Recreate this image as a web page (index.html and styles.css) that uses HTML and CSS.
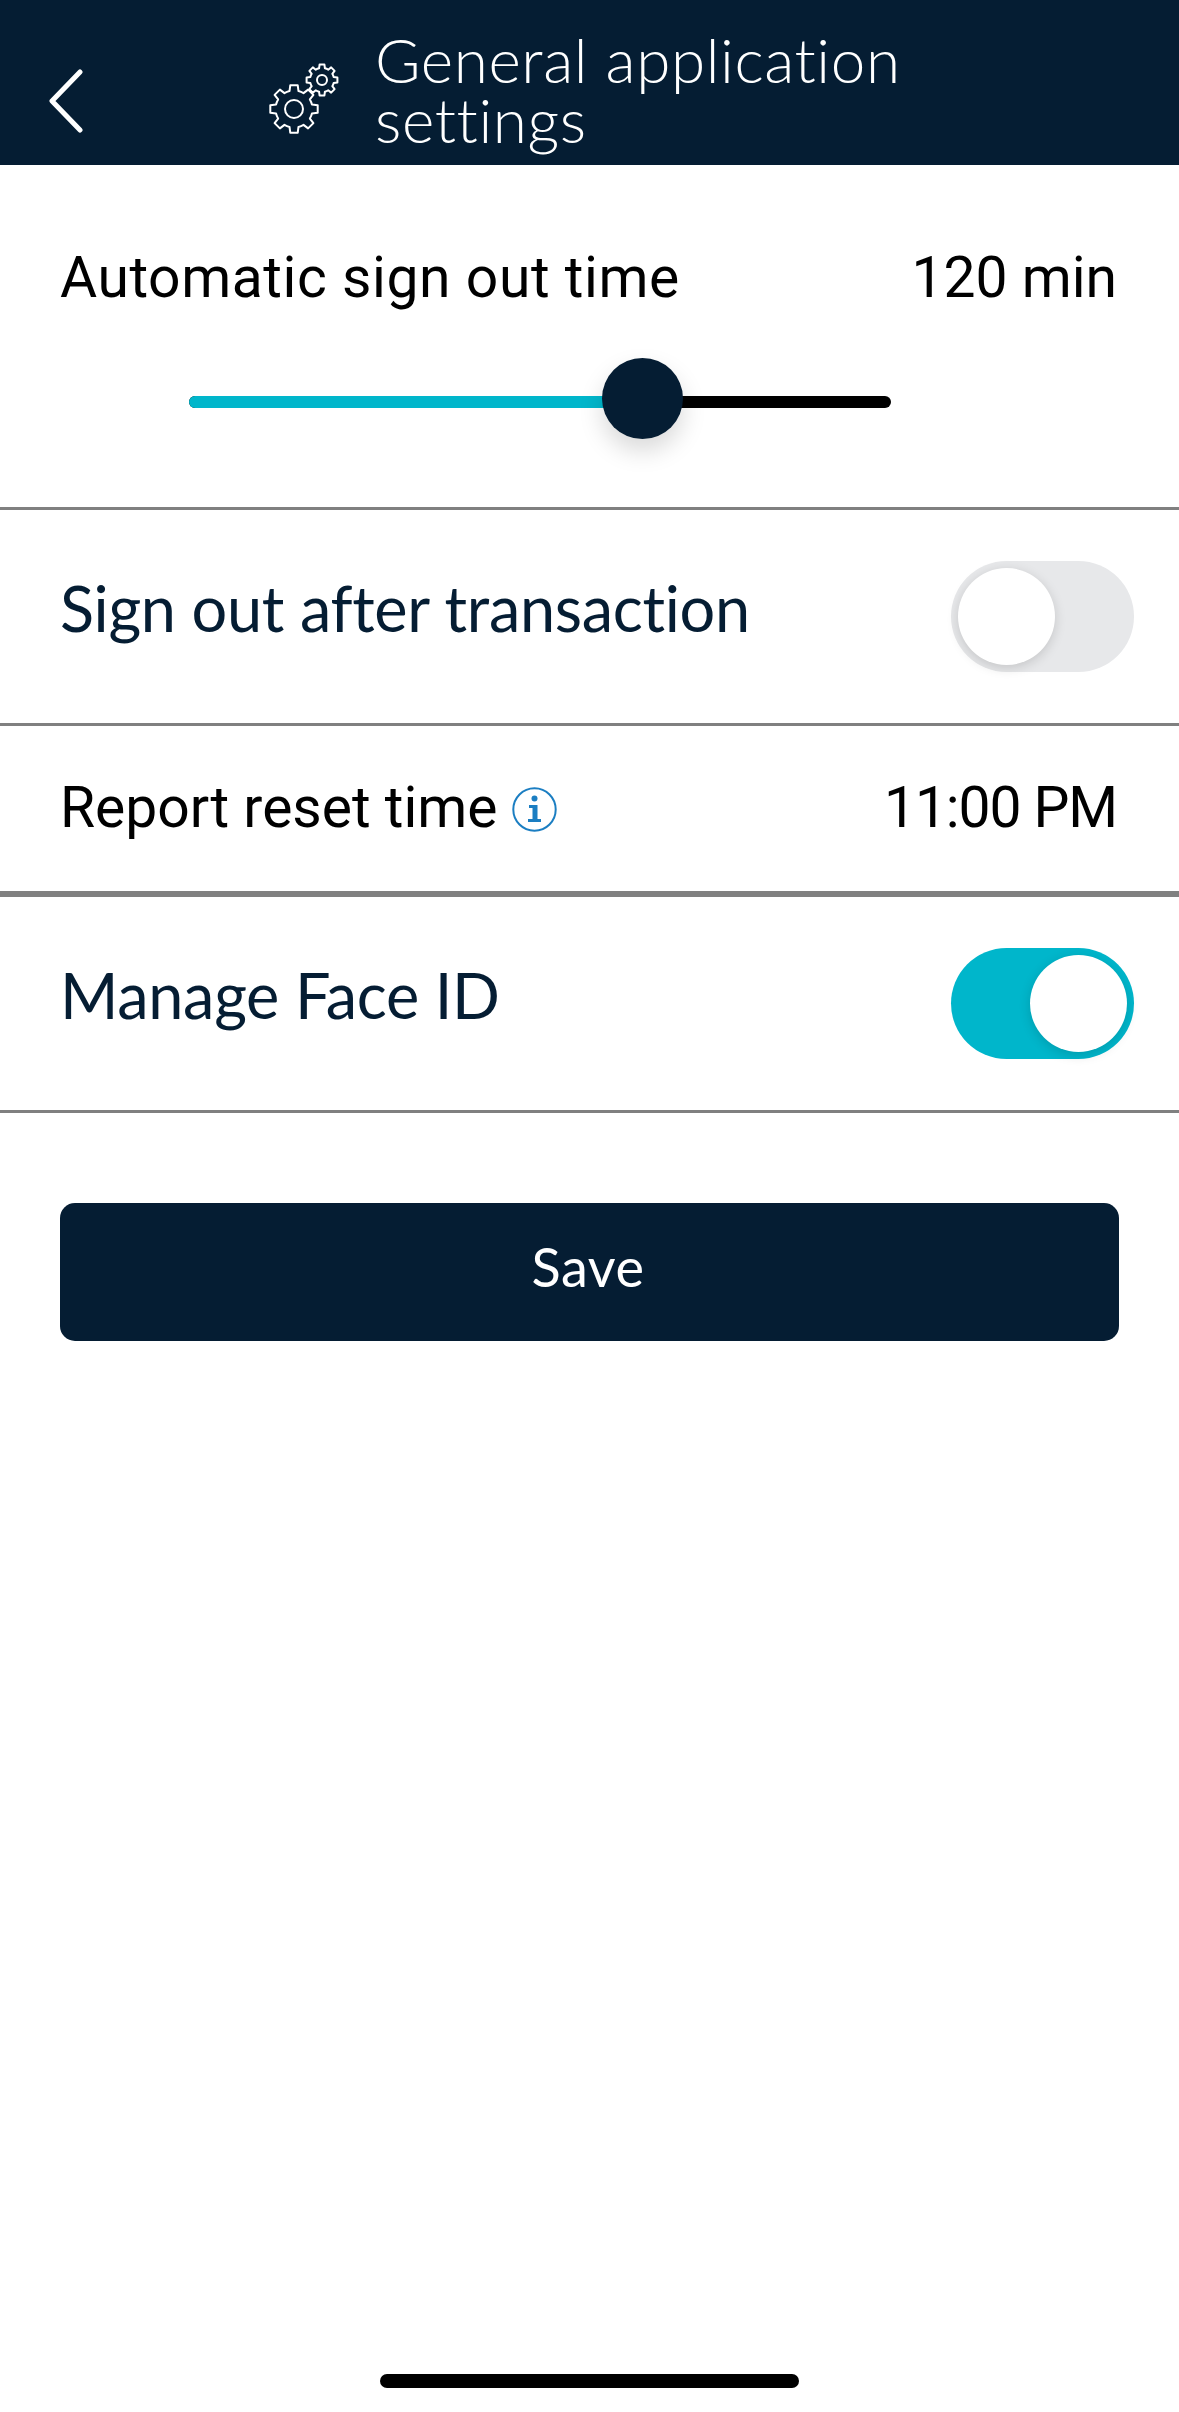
FILE: index.html
```html
<!DOCTYPE html>
<html>
<head>
  <title>General application settings</title>
  <link rel="stylesheet" href="styles.css">
</head>
<body>
  <div id="header">
    <svg class="back-icon" width="34" height="64" viewBox="0 0 34 64">
      <path d="M31 3 L3 32 L31 61" />
    </svg>
    <svg class="gear-icon" width="76" height="76" viewBox="0 0 76 76">
      <defs>
        <path id="gear" vector-effect="non-scaling-stroke" d="M-4.48 -17.95 L-3.75 -23.7 L3.75 -23.7 L4.48 -17.95 A18.5 18.5 0 0 1 9.53 -15.86 L14.1 -19.4 L19.4 -14.1 L15.86 -9.53 A18.5 18.5 0 0 1 17.95 -4.48 L23.7 -3.75 L23.7 3.75 L17.95 4.48 A18.5 18.5 0 0 1 15.86 9.53 L19.4 14.1 L14.1 19.4 L9.53 15.86 A18.5 18.5 0 0 1 4.48 17.95 L3.75 23.7 L-3.75 23.7 L-4.48 17.95 A18.5 18.5 0 0 1 -9.53 15.86 L-14.1 19.4 L-19.4 14.1 L-15.86 9.53 A18.5 18.5 0 0 1 -17.95 4.48 L-23.7 3.75 L-23.7 -3.75 L-17.95 -4.48 A18.5 18.5 0 0 1 -15.86 -9.53 L-19.4 -14.1 L-14.1 -19.4 L-9.53 -15.86 A18.5 18.5 0 0 1 -4.48 -17.95 Z" />
      </defs>
      <use href="#gear" transform="translate(25 50)" />
      <circle cx="25" cy="50" r="9" />
      <use href="#gear" transform="translate(53 21) scale(0.65)" />
      <circle cx="53" cy="21" r="5" />
    </svg>
    <div class="title">General application<br>settings</div>
  </div>

  <div class="row row-slider">
    <div class="row-line">
      <span class="label-plain label-wide">Automatic sign out time</span>
      <span class="label-plain">120 min</span>
    </div>
    <div class="slider">
      <div class="slider-fill"></div>
      <div class="slider-knob"></div>
    </div>
  </div>

  <div class="row row-toggle">
    <span class="label-brand">Sign out after transaction</span>
    <div class="toggle"><div class="toggle-knob"></div></div>
  </div>

  <div class="row row-time">
    <span class="label-plain">Report reset time
      <svg class="info-icon" width="45" height="45" viewBox="0 0 45 45">
        <circle cx="22.5" cy="22.5" r="21.2" fill="none" stroke="#1b7ec2" stroke-width="2" />
        <circle cx="22.5" cy="11.5" r="3" fill="#1b7ec2" />
        <path d="M17 18 H25.5 V32 H29 V35 H16 V32 H20.5 V21 H17 Z" fill="#1b7ec2" />
      </svg>
    </span>
    <span class="label-plain label-narrow">11:00 PM</span>
  </div>

  <div class="row row-toggle row-faceid">
    <span class="label-brand">Manage Face ID</span>
    <div class="toggle toggle-on"><div class="toggle-knob"></div></div>
  </div>

  <button class="save-button">Save</button>

  <div class="home-indicator"></div>
</body>
</html>
```

FILE: styles.css
```css
html, body {
  height: 100%;
}

body {
  display: flex;
  flex-direction: column;
  height: 2412px;
  margin: 0;
  overflow: hidden;
  background-color: #fff;
  font-family: Roboto, sans-serif;
}

#header {
  display: flex;
  flex: none;
  align-items: center;
  height: 165px;
  background-color: #051d33;
  color: #fff;
}

.back-icon {
  flex: none;
  margin: 36px 0 0 49px;
}

.back-icon path {
  fill: none;
  stroke: #fff;
  stroke-width: 5;
  stroke-linecap: round;
  stroke-linejoin: round;
}

.gear-icon {
  flex: none;
  margin: 28px 0 0 186px;
}

.gear-icon use,
.gear-icon circle {
  fill: none;
  stroke: #fff;
  stroke-width: 2;
  stroke-linejoin: round;
}

.title {
  margin: 12px 0 0 30px;
  font-family: Lato, sans-serif;
  font-size: 62px;
  font-weight: 300;
  line-height: 60px;
  letter-spacing: 0.6px;
}

.row {
  display: flex;
  flex: none;
  align-items: center;
  justify-content: space-between;
  box-sizing: border-box;
  border-bottom: 3px solid #808080;
}

.row-slider {
  display: block;
  height: 345px;
  padding: 0 62px 0 60px;
}

.row-line {
  display: flex;
  justify-content: space-between;
  padding-top: 78px;
  line-height: 70px;
}

.label-plain {
  color: #000;
  font-size: 57px;
}

.label-wide {
  letter-spacing: 0.57px;
}

.label-narrow {
  letter-spacing: -1.1px;
}

.label-brand {
  margin-bottom: 18px;
  color: #051d33;
  font-family: Lato, sans-serif;
  font-size: 63px;
  letter-spacing: -0.3px;
}

.slider {
  position: relative;
  width: 702px;
  height: 12px;
  margin: 83px 0 0 129px;
  border-radius: 6px;
  background-color: #000;
}

.slider-fill {
  width: 430px;
  height: 100%;
  border-radius: 6px 0 0 6px;
  background-color: #00b6cb;
}

.slider-knob {
  position: absolute;
  top: -38px;
  left: 413px;
  width: 81px;
  height: 81px;
  border-radius: 50%;
  background-color: #051d33;
  box-shadow: 0 12px 24px rgba(0, 0, 0, 0.15);
}

.row-toggle {
  height: 216px;
  padding: 0 45px 0 60px;
}

.row-time {
  height: 171px;
  padding: 0 62px 3px 60px;
  border-bottom-width: 6px;
}

.info-icon {
  vertical-align: -5px;
}

.toggle {
  display: flex;
  flex: none;
  box-sizing: border-box;
  width: 183px;
  height: 111px;
  padding: 7px;
  border-radius: 56px;
  background-color: #e7e8ea;
}

.toggle-on {
  justify-content: flex-end;
  background-color: #00b6cb;
}

.toggle-knob {
  width: 97px;
  height: 97px;
  border-radius: 50%;
  background-color: #fff;
  box-shadow: 0 3px 12px rgba(0, 0, 0, 0.15);
}

.save-button {
  flex: none;
  width: 1059px;
  height: 138px;
  margin: 90px 0 0 60px;
  padding: 0 3px 12px 0;
  border: none;
  border-radius: 15px;
  background-color: #051d33;
  color: #fff;
  font-family: Lato, sans-serif;
  font-size: 54px;
  letter-spacing: 0.5px;
}

.home-indicator {
  flex: none;
  width: 419px;
  height: 14px;
  margin: auto 0 24px 380px;
  border-radius: 7px;
  background-color: #000;
}
```
